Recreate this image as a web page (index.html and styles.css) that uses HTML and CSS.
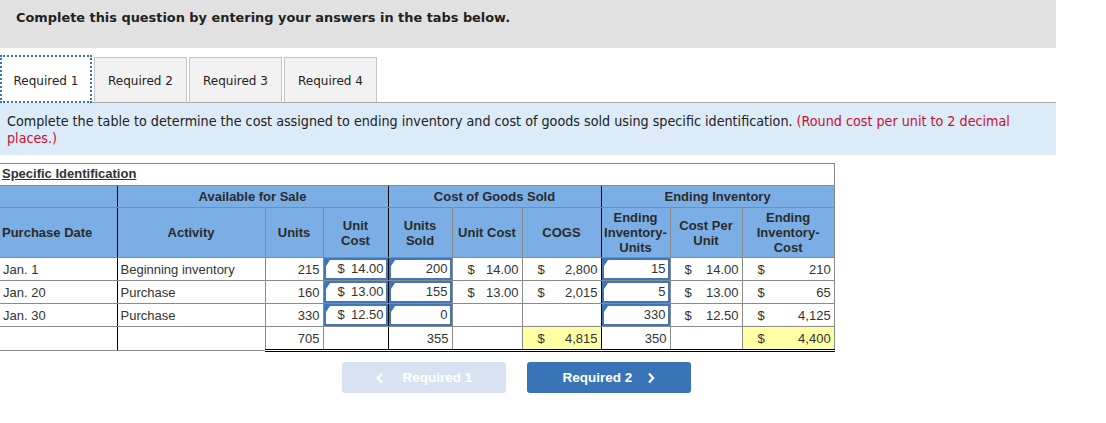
FILE: index.html
```html
<!DOCTYPE html>
<html>
<head>
<meta charset="utf-8">
<link rel="stylesheet" href="styles.css">
</head>
<body>
<div class="banner">Complete this question by entering your answers in the tabs below.</div>
<div class="tabs">
  <div class="tab active">Required 1</div>
  <div class="tab">Required 2</div>
  <div class="tab">Required 3</div>
  <div class="tab">Required 4</div>
</div>
<div class="instr">Complete the table to determine the cost assigned to ending inventory and cost of goods sold using specific identification. <span class="red">(Round cost per unit to 2 decimal</span> <span class="red">places.)</span></div>

<table class="grid">
  <colgroup>
    <col style="width:117px"><col style="width:148px"><col style="width:58px"><col style="width:65px"><col style="width:64px"><col style="width:70px"><col style="width:79px"><col style="width:69px"><col style="width:72px"><col style="width:92px">
  </colgroup>
  <tr class="title"><td colspan="10"><span>Specific Identification</span></td></tr>
  <tr class="h1">
    <th class="sep"></th>
    <th colspan="3" class="sep">Available for Sale</th>
    <th colspan="3" class="sep">Cost of Goods Sold</th>
    <th colspan="3">Ending Inventory</th>
  </tr>
  <tr class="h2">
    <th class="left sep">Purchase Date</th>
    <th>Activity</th>
    <th>Units</th>
    <th class="sep">Unit<br>Cost</th>
    <th>Units<br>Sold</th>
    <th>Unit Cost</th>
    <th class="sep">COGS</th>
    <th>Ending<br>Inventory-<br>Units</th>
    <th>Cost Per<br>Unit</th>
    <th>Ending<br>Inventory-<br>Cost</th>
  </tr>
  <tr class="row">
    <td class="sep">Jan. 1</td><td>Beginning inventory</td><td class="num">215</td>
    <td class="in sep"><div class="inp money"><span>$</span><span>14.00</span></div></td>
    <td class="in"><div class="inp num">200</div></td>
    <td><div class="money m15"><span>$</span><span>14.00</span></div></td>
    <td class="sep"><div class="money m15"><span>$</span><span>2,800</span></div></td>
    <td class="in"><div class="inp num">15</div></td>
    <td><div class="money m14"><span>$</span><span>14.00</span></div></td>
    <td><div class="money m15"><span>$</span><span>210</span></div></td>
  </tr>
  <tr class="row">
    <td class="sep">Jan. 20</td><td>Purchase</td><td class="num">160</td>
    <td class="in sep"><div class="inp money"><span>$</span><span>13.00</span></div></td>
    <td class="in"><div class="inp num">155</div></td>
    <td><div class="money m15"><span>$</span><span>13.00</span></div></td>
    <td class="sep"><div class="money m15"><span>$</span><span>2,015</span></div></td>
    <td class="in"><div class="inp num">5</div></td>
    <td><div class="money m14"><span>$</span><span>13.00</span></div></td>
    <td><div class="money m15"><span>$</span><span>65</span></div></td>
  </tr>
  <tr class="row">
    <td class="sep">Jan. 30</td><td>Purchase</td><td class="num">330</td>
    <td class="in sep"><div class="inp money"><span>$</span><span>12.50</span></div></td>
    <td class="in"><div class="inp num">0</div></td>
    <td></td>
    <td class="sep"></td>
    <td class="in"><div class="inp num">330</div></td>
    <td><div class="money m14"><span>$</span><span>12.50</span></div></td>
    <td><div class="money m15"><span>$</span><span>4,125</span></div></td>
  </tr>
  <tr class="row total">
    <td class="sep"></td><td></td><td class="num tot">705</td>
    <td class="sep"></td>
    <td class="num tot">355</td>
    <td></td>
    <td class="sep tot yel"><div class="money m15"><span>$</span><span>4,815</span></div></td>
    <td class="num tot">350</td>
    <td></td>
    <td class="tot yel"><div class="money m15"><span>$</span><span>4,400</span></div></td>
  </tr>
</table>

<div class="nav">
  <div class="btn disabled"><svg width="8" height="12" viewBox="0 0 8 12"><path d="M6 1.5 L1.8 6 L6 10.5" fill="none" stroke="#fff" stroke-width="2.2"/></svg><span>Required 1</span></div>
  <div class="btn primary"><span>Required 2</span><svg width="8" height="12" viewBox="0 0 8 12"><path d="M2 1.5 L6.2 6 L2 10.5" fill="none" stroke="#fff" stroke-width="2.2"/></svg></div>
</div>
</body>
</html>
```
FILE: styles.css
```css
body {
  margin: 0;
  background: #fff;
  font-family: "Liberation Sans", Arial, sans-serif;
  color: #333;
}
.banner {
  width: 1056px;
  height: 48px;
  box-sizing: border-box;
  background: #e1e1e1;
  padding: 10px 0 0 16px;
  font-family: "DejaVu Sans", Verdana, sans-serif;
  font-weight: bold;
  font-size: 12.9px;
  color: #222;
}
.tabs {
  display: flex;
  gap: 2px;
  margin-top: 7px;
  height: 48px;
  width: 1056px;
  border-bottom: 1px solid #a8a8a8;
  box-sizing: border-box;
  align-items: flex-end;
}
.tab {
  width: 93px;
  height: 45px;
  box-sizing: border-box;
  background: #f2f2f2;
  border: 1px solid #c6c6c6;
  border-bottom: none;
  display: flex;
  align-items: center;
  justify-content: center;
  padding-top: 1px;
  font-family: "DejaVu Sans", Verdana, sans-serif;
  font-size: 12px;
  color: #222;
}
.tab.active {
  background: #fff;
  width: 92px;
  height: 48px;
  border: 2px dotted #3a72b8;
  margin-bottom: -1px;
  padding-top: 4px;
}
.instr {
  width: 1056px;
  height: 52px;
  box-sizing: border-box;
  background: #dbebf8;
  padding: 10px 20px 0 7px;
  font-family: "DejaVu Sans Condensed", "DejaVu Sans", sans-serif;
  font-size: 14.2px;
  line-height: 17px;
  color: #222;
}
.red { color: #c8102e; }

.grid {
  margin-top: 8px;
  border-collapse: collapse;
  table-layout: fixed;
  width: 834px;
  font-size: 13px;
  color: #333;
}
.grid td, .grid th {
  border: 1px solid #8a8a8a;
  padding: 0;
  overflow: hidden;
  white-space: nowrap;
}
.grid .title td {
  border-left: none;
  text-align: left;
  vertical-align: top;
  line-height: 17px;
  padding: 1px 0 3px 2px;
}
.title span {
  font-weight: bold;
  text-decoration: underline;
}
.grid th {
  background: #7aaee5;
  color: #2b2b2b;
  font-weight: bold;
  font-size: 13px;
  line-height: 15px;
  text-align: center;
}
.h1 th { height: 21px; }
.h2 th { height: 49px; }
.grid th.left { text-align: left; padding-left: 2px; }
.grid .sep { border-right: 1px solid #000; }
.grid tr > :first-child { border-left: none; }
.row td { height: 22px; padding: 0 3px; font-size: 13px; }
.row td.num { text-align: right; }
.row td.in { padding: 0; }
.inp {
  height: 22px;
  box-sizing: border-box;
  border: 2px solid #4177ba;
  background: #fff;
  position: relative;
  line-height: 18px;
  padding: 0 2px;
}
.inp::before {
  content: "";
  position: absolute;
  left: 0;
  top: 0;
  border-top: 6px solid #3a72c0;
  border-right: 4px solid transparent;
}
.inp.num { text-align: right; }
.money {
  display: flex;
  justify-content: space-between;
}
.inp.money { padding-left: 12px; }
.m15 { padding-left: 12px; }
.m14 { padding-left: 11px; }
.total td { border-bottom: 3px double #000; }
.total td:first-child, .total td:nth-child(2) { border-bottom: 1px solid #8a8a8a; }
.total td.tot { border-top: 1px solid #000; }
.total td.yel { background: #ffffa3; }

.nav {
  display: flex;
  gap: 21px;
  padding-left: 342px;
  margin-top: 10px;
}
.btn {
  width: 164px;
  height: 31px;
  border-radius: 3px;
  display: flex;
  align-items: center;
  justify-content: center;
  gap: 15px;
  font-weight: bold;
  font-size: 13.5px;
  color: #fff;
}
.btn.disabled { background: #d7e3f1; gap: 19px; }
.btn.primary { background: #3a74b8; }
```
